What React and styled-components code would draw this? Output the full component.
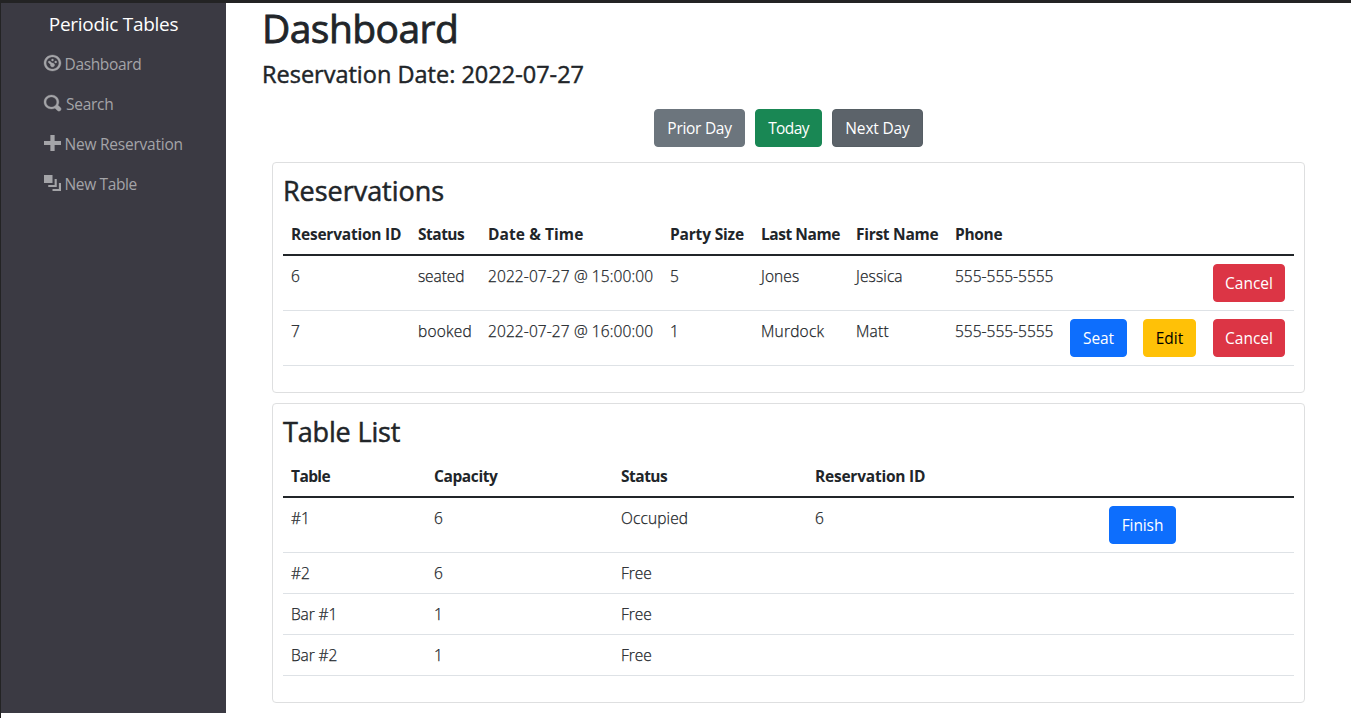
import React from 'react';
import styled, { createGlobalStyle, css } from 'styled-components';

const GlobalStyle = createGlobalStyle`
  * { box-sizing: border-box; }
  body {
    margin: 0;
    background: #fff;
    color: #212529;
    font: 400 15.5px/24px "Open Sans", "Noto Sans", sans-serif;
  }
`;

const tracked = css`
  letter-spacing: ${(p) => p.$track || 0}px;
`;

const Page = styled.div`
  display: flex;
  align-items: flex-start;
  width: 100%;
  height: 718px;
  overflow: hidden;
  border-top: 3px solid #232324;
  border-left: 1px solid #232324;
`;

const Sidebar = styled.nav`
  flex: none;
  width: 225px;
  height: 710px;
  padding-top: 6px;
  background: #3b3a43;
`;

const Brand = styled.div`
  height: 35px;
  color: #fff;
  font-size: 19px;
  line-height: 30px;
  text-align: center;
  ${tracked}
`;

const NavList = styled.ul`
  margin: 0;
  padding: 0;
  list-style: none;
`;

const NavItem = styled.li`
  display: flex;
  align-items: center;
  gap: ${(p) => p.$gap || 3.5}px;
  height: 40px;
  padding-left: 43px;
  color: #a4a4a8;
  white-space: nowrap;
  ${tracked}
`;

const Icon = styled.svg`
  flex: none;
  width: 17px;
  height: 16px;
  margin-bottom: 2px;
  overflow: visible;
  fill: currentColor;
  stroke: currentColor;
  stroke-width: ${(p) => p.$stroke || 0};
`;

const Main = styled.main`
  flex: 1;
  min-width: 0;
  padding: 1px 36px 0;
`;

const PageTitle = styled.h1`
  margin: 0 0 8px;
  font-size: 39px;
  font-weight: 500;
  line-height: 48px;
  -webkit-text-stroke: 0.8px currentColor;
  ${tracked}
`;

const DateTitle = styled.h4`
  margin: 0;
  font-size: 23.5px;
  font-weight: 500;
  line-height: 29px;
  -webkit-text-stroke: 0.45px currentColor;
  ${tracked}
`;

const DayButtons = styled.div`
  display: flex;
  justify-content: center;
  gap: 10px;
  margin: 20px 0 15px;
`;

const tones = {
  grey: ['#6c757d', '#6c757d', '#fff'],
  greyDark: ['#5c636a', '#565e64', '#fff'],
  green: ['#198754', '#198754', '#fff'],
  blue: ['#0d6efd', '#0d6efd', '#fff'],
  yellow: ['#ffc107', '#ffc107', '#000'],
  red: ['#dc3545', '#dc3545', '#fff'],
};

const Button = styled.button`
  display: block;
  width: ${(p) => p.$width}px;
  height: 38px;
  padding: 6px 0;
  border: 1px solid ${(p) => tones[p.$tone][1]};
  border-radius: 4px;
  background: ${(p) => tones[p.$tone][0]};
  color: ${(p) => tones[p.$tone][2]};
  font: inherit;
  font-weight: 400;
  text-align: center;
  white-space: nowrap;
  -webkit-text-stroke: 0;
  ${tracked}
`;

const Card = styled.section`
  margin: 0 10px 10px;
  padding: 10px 10px 26px;
  border: 1px solid #dedfe0;
  border-radius: 4px;
`;

const CardTitle = styled.h3`
  margin: 0 0 ${(p) => p.$space}px;
  font-size: 27px;
  font-weight: 500;
  line-height: 36px;
  -webkit-text-stroke: 0.5px currentColor;
  ${tracked}
`;

const Table = styled.table`
  width: 100%;
  table-layout: fixed;
  border-collapse: separate;
  border-spacing: 0;
`;

const Col = styled.col`
  width: ${(p) => p.$width}px;
`;

const HeadCell = styled.th`
  height: 42px;
  padding: 8px 0 8px 8px;
  border-bottom: 2px solid #212529;
  font-weight: 700;
  text-align: left;
  vertical-align: top;
  white-space: nowrap;
  ${tracked}
`;

const Cell = styled.td`
  padding: 8px 0 8px 8px;
  border-bottom: 1px solid #dee2e6;
  font-weight: 300;
  vertical-align: top;
  white-space: nowrap;
  -webkit-text-stroke: 0.25px currentColor;
  ${tracked}
`;

const icons = {
  dashboard:
    'M4 0c-2.2 0-4 1.8-4 4s1.8 4 4 4 4-1.8 4-4-1.8-4-4-4zm0 1c1.66 0 3 1.34 3 3s-1.34 3-3 3-3-1.34-3-3 1.34-3 3-3zm0 1c-.28 0-.5.22-.5.5s.22.5.5.5.5-.22.5-.5-.22-.5-.5-.5zm-1.66 1a.5.5 0 0 0-.19.84l.91.91c-.02.08-.06.16-.06.25 0 .55.45 1 1 1s1-.45 1-1-.45-1-1-1c-.09 0-.17.04-.25.06l-.91-.91a.5.5 0 0 0-.44-.16.5.5 0 0 0-.06 0zm3.16 0c-.28 0-.5.22-.5.5s.22.5.5.5.5-.22.5-.5-.22-.5-.5-.5z',
  search:
    'M3.5 0c-1.93 0-3.5 1.57-3.5 3.5s1.57 3.5 3.5 3.5c.59 0 1.17-.14 1.66-.41a1 1 0 0 0 .13.13l1 1a1.02 1.02 0 1 0 1.44-1.44l-1-1a1 1 0 0 0-.16-.13c.27-.49.44-1.06.44-1.66 0-1.93-1.55-3.5-3.5-3.5zm0 1c1.39 0 2.5 1.11 2.5 2.5 0 .66-.24 1.27-.66 1.72l-.03.03a1 1 0 0 0-.13.13c-.44.4-1.04.63-1.69.63-1.39 0-2.5-1.11-2.5-2.5s1.11-2.5 2.5-2.5z',
  plus: 'M3 0v3h-3v2h3v3h2v-3h3v-2h-3v-3h-2z',
  layers: 'M0 0v4h4v-4h-4zm5 2v3h-3v1h4v-4h-1zm2 2v3h-3v1h4v-4h-1z',
};

const nav = [
  { icon: 'dashboard', label: 'Dashboard', track: -0.35, stroke: 0.15 },
  { icon: 'search', label: 'Search', track: -0.26, gap: 5, stroke: 0.15 },
  { icon: 'plus', label: 'New Reservation', track: -0.23 },
  { icon: 'layers', label: 'New Table', track: -0.36 },
];

const cancel = { label: 'Cancel', tone: 'red', width: 72 };

const reservations = {
  title: ['Reservations', -0.04],
  space: 5,
  widths: [127, 70, 182, 91, 95, 99, 115, 73, 70, 89],
  head: [
    ['Reservation ID', -0.22],
    ['Status', -0.5],
    ['Date & Time', 0.08],
    ['Party Size', -0.17],
    ['Last Name', -0.45],
    ['First Name', -0.28],
    ['Phone', -0.3],
    [''],
    [''],
    [''],
  ],
  rows: [
    [['6'], ['seated', -0.1], ['2022-07-27 @ 15:00:00', 0.1], ['5'], ['Jones', 0.1], ['Jessica', 0.12], ['555-555-5555', 0], [''], [''], cancel],
    [
      ['7'],
      ['booked', 0.22],
      ['2022-07-27 @ 16:00:00', 0.1],
      ['1'],
      ['Murdock', 0.2],
      ['Matt', 0.2],
      ['555-555-5555', 0],
      { label: 'Seat', tone: 'blue', width: 57, track: -0.1 },
      { label: 'Edit', tone: 'yellow', width: 53 },
      cancel,
    ],
  ],
};

const tables = {
  title: ['Table List', -0.15],
  space: 6,
  widths: [143, 187, 194, 294, 193],
  head: [['Table', -0.6], ['Capacity', -0.4], ['Status', -0.5], ['Reservation ID', -0.22], ['']],
  rows: [
    [['#1'], ['6'], ['Occupied', 0.12], ['6'], { label: 'Finish', tone: 'blue', width: 67, track: -0.1 }],
    [['#2'], ['6'], ['Free', 0], [''], ['']],
    [['Bar #1', -0.1], ['1'], ['Free', 0], [''], ['']],
    [['Bar #2', -0.1], ['1'], ['Free', 0], [''], ['']],
  ],
};

function ActionButton({ label, tone, width, track }) {
  return (
    <Button type="button" $tone={tone} $width={width} $track={track}>
      {label}
    </Button>
  );
}

function TableCard({ title, space, widths, head, rows }) {
  return (
    <Card>
      <CardTitle $space={space} $track={title[1]}>
        {title[0]}
      </CardTitle>
      <Table>
        <colgroup>
          {widths.map((w, i) => (
            <Col key={i} $width={w} />
          ))}
        </colgroup>
        <thead>
          <tr>
            {head.map(([text, track], i) => (
              <HeadCell key={i} $track={track}>
                {text}
              </HeadCell>
            ))}
          </tr>
        </thead>
        <tbody>
          {rows.map((row, r) => (
            <tr key={r}>
              {row.map((cell, i) =>
                Array.isArray(cell) ? (
                  <Cell key={i} $track={cell[1]}>
                    {cell[0]}
                  </Cell>
                ) : (
                  <Cell key={i}>
                    <ActionButton {...cell} />
                  </Cell>
                )
              )}
            </tr>
          ))}
        </tbody>
      </Table>
    </Card>
  );
}

export default function App() {
  return (
    <>
      <GlobalStyle />
      <Page>
        <Sidebar>
          <Brand $track={-0.28}>Periodic Tables</Brand>
          <NavList>
            {nav.map(({ icon, label, track, gap, stroke }) => (
              <NavItem key={label} $track={track} $gap={gap}>
                <Icon viewBox="0 0 8 8" preserveAspectRatio="none" $stroke={stroke}>
                  <path d={icons[icon]} />
                </Icon>
                {label}
              </NavItem>
            ))}
          </NavList>
        </Sidebar>
        <Main>
          <PageTitle $track={-0.55}>Dashboard</PageTitle>
          <DateTitle $track={0}>Reservation Date: 2022-07-27</DateTitle>
          <DayButtons>
            <ActionButton label="Prior Day" tone="grey" width={91} track={-0.29} />
            <ActionButton label="Today" tone="green" width={67} track={-0.6} />
            <ActionButton label="Next Day" tone="greyDark" width={91} track={-0.17} />
          </DayButtons>
          <TableCard {...reservations} />
          <TableCard {...tables} />
        </Main>
      </Page>
    </>
  );
}
